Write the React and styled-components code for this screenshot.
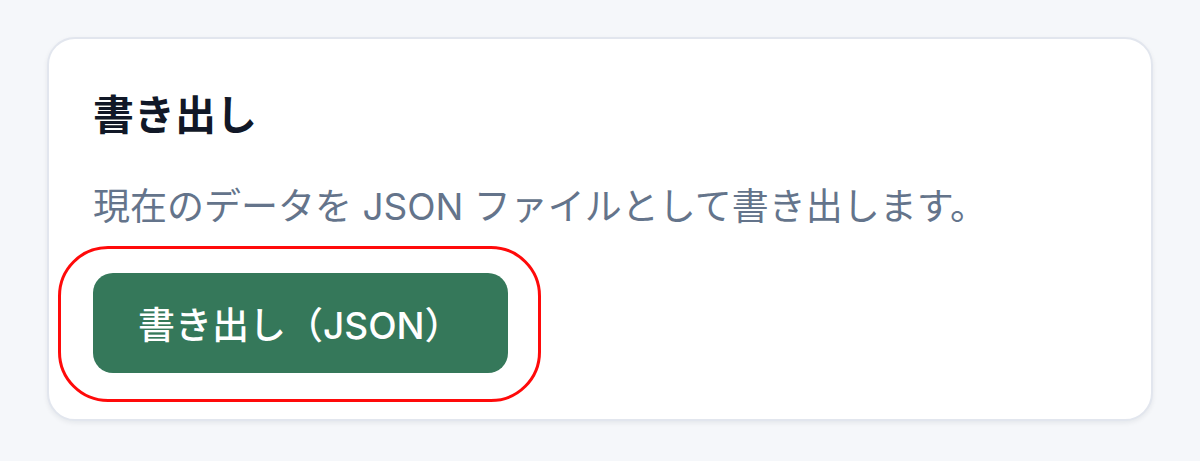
import React from "react";
import styled, { createGlobalStyle } from "styled-components";

const GlobalStyle = createGlobalStyle`
  html, body {
    margin: 0;
    padding: 0;
    background: #f5f7fa;
  }
  body {
    font-family: "Inter", "Noto Sans CJK JP", sans-serif;
  }
`;

const Page = styled.div`
  padding: 37px 47px 41px 47px;
`;

const Card = styled.section`
  background: #fff;
  border: 2px solid #e2e6ee;
  border-radius: 28px;
  box-shadow: 0 2px 5px rgba(15, 23, 42, 0.07);
  padding: 48px 46px 46px 44px;
`;

const Title = styled.h2`
  margin: 0;
  font-size: 41px;
  line-height: 56px;
  font-weight: 700;
  color: #111827;
`;

const Description = styled.p`
  margin: 38px 0 0 0;
  font-size: 37px;
  line-height: 52px;
  color: #64748b;
`;

const Highlight = styled.div`
  position: relative;
  display: inline-block;
  margin-top: 40px;

  &::before {
    content: "";
    position: absolute;
    top: -27px;
    left: -35px;
    right: -33px;
    bottom: -29px;
    border: 3px solid #ff0a0a;
    border-radius: 50px;
    pointer-events: none;
  }
`;

const Button = styled.button`
  display: block;
  width: 415px;
  height: 100px;
  padding: 0 0 0 45px;
  text-align: left;
  border: none;
  border-radius: 20px;
  background: #35785a;
  color: #fff;
  font-family: inherit;
  font-size: 37px;
  font-weight: 500;
  cursor: pointer;
`;

export default function App() {
  return (
    <>
      <GlobalStyle />
      <Page>
        <Card>
          <Title>書き出し</Title>
          <Description>現在のデータを JSON ファイルとして書き出します。</Description>
          <Highlight>
            <Button>書き出し（JSON）</Button>
          </Highlight>
        </Card>
      </Page>
    </>
  );
}
